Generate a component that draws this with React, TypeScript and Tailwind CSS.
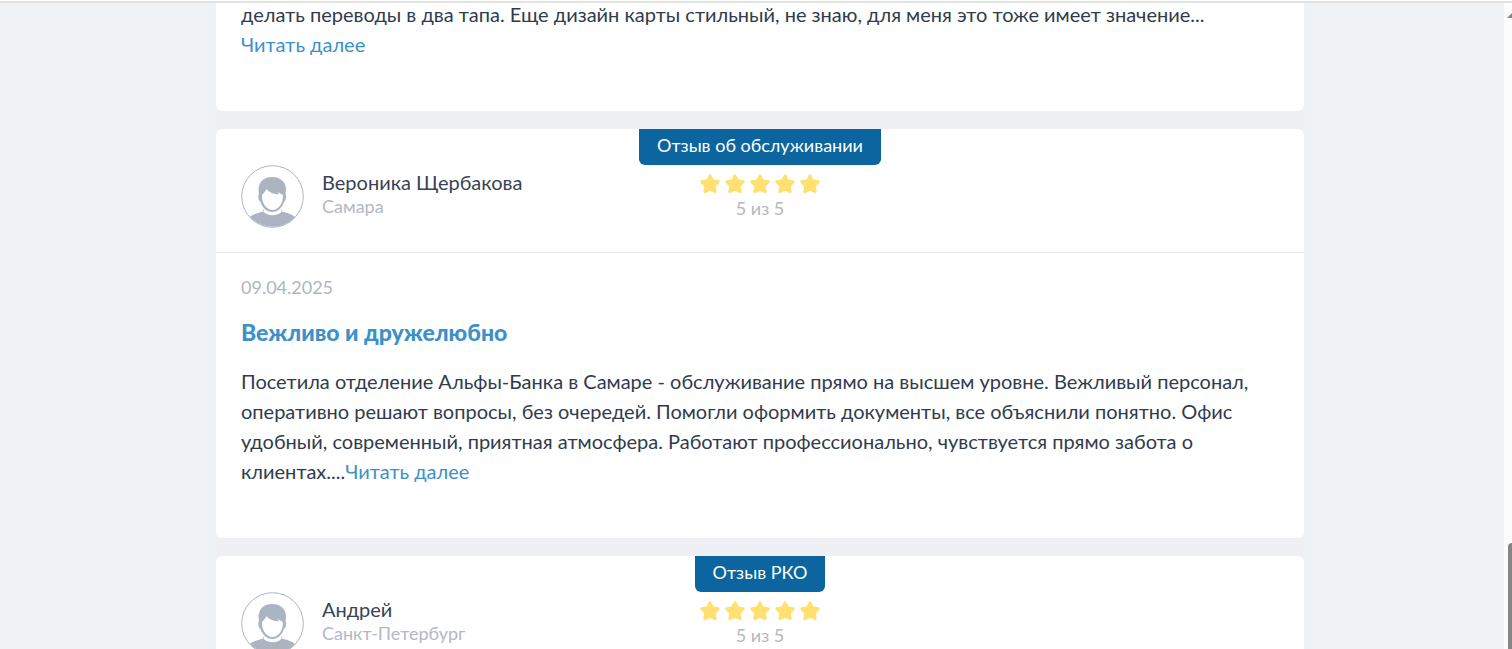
type Review = {
  name: string;
  city: string;
  kind: string;
  date: string;
  title: string;
  text: string;
};

const reviews: Review[] = [
  {
    name: "Вероника Щербакова",
    city: "Самара",
    kind: "Отзыв об обслуживании",
    date: "09.04.2025",
    title: "Вежливо и дружелюбно",
    text: "Посетила отделение Альфы-Банка в Самаре - обслуживание прямо на высшем уровне. Вежливый персонал, оперативно решают вопросы, без очередей. Помогли оформить документы, все объяснили понятно. Офис удобный, современный, приятная атмосфера. Работают профессионально, чувствуется прямо забота о клиентах....",
  },
  { name: "Андрей", city: "Санкт-Петербург", kind: "Отзыв РКО", date: "", title: "", text: "" },
];

function Avatar() {
  return (
    <svg viewBox="0 0 63 63" className="size-[63px] shrink-0" aria-hidden="true">
      <circle cx="31.5" cy="31.5" r="30.8" fill="#fff" stroke="#adb4c1" />
      <path
        d="M9 52C13 48.5 19 47.5 22 46.5V44H41V46.5C44 47.5 50 48.5 54 52C42 65 21 65 9 52Z"
        fill="#adb4c1"
      />
      <path
        d="M22.5 40L22.5 46.5C26 51.5 37 51.5 40.5 46.5V40Z"
        fill="#fff"
      />
      <path
        d="M18 29C16 19 21 12 31 12C41 12 47 19 44.5 29C46 31 45 36 43 37C41.5 42 37 47 31.3 47C25.5 47 21 42 19.5 37C17.5 36 16.5 31 18 29Z"
        fill="#adb4c1"
      />
      <path
        d="M25.5 24C28 27.5 33 29.5 38.5 29.2C37.5 28.4 36.7 27.4 36.2 26.4C38 28 40.5 28.6 41.8 30C42.5 38 37.5 45 31.5 45C25.5 45 20.5 38 21 30C22.5 28 24 27 25.5 24Z"
        fill="#fff"
      />
    </svg>
  );
}

function Star() {
  return (
    <svg viewBox="0 0 22 22" className="size-[22px]" aria-hidden="true">
      <path
        d="M11 2.8L13.4 7.8L19.2 8.7L15.2 12.9L16.2 18.6L11 16.2L5.8 18.6L6.8 12.9L2.8 8.7L8.6 7.8Z"
        fill="#ffe070"
        stroke="#ffe070"
        strokeWidth="3"
        strokeLinejoin="round"
      />
    </svg>
  );
}

function MoreLink() {
  return (
    <a href="#review" className="inline-block text-[#3c91c8]">
      Читать далее
    </a>
  );
}

function ReviewCard({ review }: { review: Review }) {
  return (
    <article className="rounded-md bg-white">
      <header className="grid h-[124px] grid-cols-[1fr_auto_1fr] border-b border-[#e9eaeb] px-[25px]">
        <div className="flex gap-[18px] pt-9">
          <Avatar />
          <div className="pt-[5px]">
            <p className="text-xl leading-6 text-[#384356]">{review.name}</p>
            <p className="text-lg leading-6 text-[#b3b8c4]">{review.city}</p>
          </div>
        </div>
        <div className="flex flex-col items-center">
          <span className="h-9 rounded-b-md bg-[#0c659e] px-[18px] text-lg leading-8 text-white">
            {review.kind}
          </span>
          <div className="mt-2 flex gap-[3px]">
            {[1, 2, 3, 4, 5].map((n) => (
              <Star key={n} />
            ))}
          </div>
          <p className="mt-px text-lg leading-6 text-[#b3b8c4]">5 из 5</p>
        </div>
      </header>
      <div className="px-[25px] pt-[22px] pb-[52px]">
        {review.text && (
          <>
            <time className="block text-lg leading-6 text-[#b0b5bd]">{review.date}</time>
            <h2 className="mt-[18px] text-[23px] leading-[30px] font-black text-[#3c91c8]">
              <a href="#review">{review.title}</a>
            </h2>
            <p className="mt-[19px] text-xl leading-[30px] text-[#303b4e]">
              {review.text}
              <MoreLink />
            </p>
          </>
        )}
      </div>
    </article>
  );
}

export default function App() {
  return (
    <div className="relative flex h-screen overflow-hidden bg-[#eff3f6] font-['Lato','Liberation_Sans',sans-serif]">
      <div className="absolute inset-x-0 top-0 z-10 h-[3px] border-b-2 border-[#e0e3df] bg-white" />
      <main className="flex min-w-0 flex-1 items-start justify-center overflow-hidden pl-4">
        <div className="-mt-8 flex w-full max-w-[1088px] flex-col gap-[18px] bg-[#eff0f3] shadow-[0_0_24px_#eff0f3]">
          <article className="rounded-md bg-white px-[25px] pt-[31px] pb-[52px]">
            <p className="text-xl leading-[30px] text-[#303b4e]">
              делать переводы в два тапа. Еще дизайн карты стильный, не знаю, для меня это тоже имеет значение...
              <br />
              <MoreLink />
            </p>
          </article>
          {reviews.map((review) => (
            <ReviewCard key={review.name} review={review} />
          ))}
        </div>
      </main>
      <div className="flex w-2 flex-col items-end bg-[#fcfcfc]" aria-hidden="true">
        <svg viewBox="0 0 5 5" className="mt-[13px] h-[5px] w-[5px]">
          <path d="M0 5L5 0V5Z" fill="#868686" />
        </svg>
        <div className="mt-[525px] w-1 flex-1 rounded-tl bg-[#868686]" />
      </div>
    </div>
  );
}
